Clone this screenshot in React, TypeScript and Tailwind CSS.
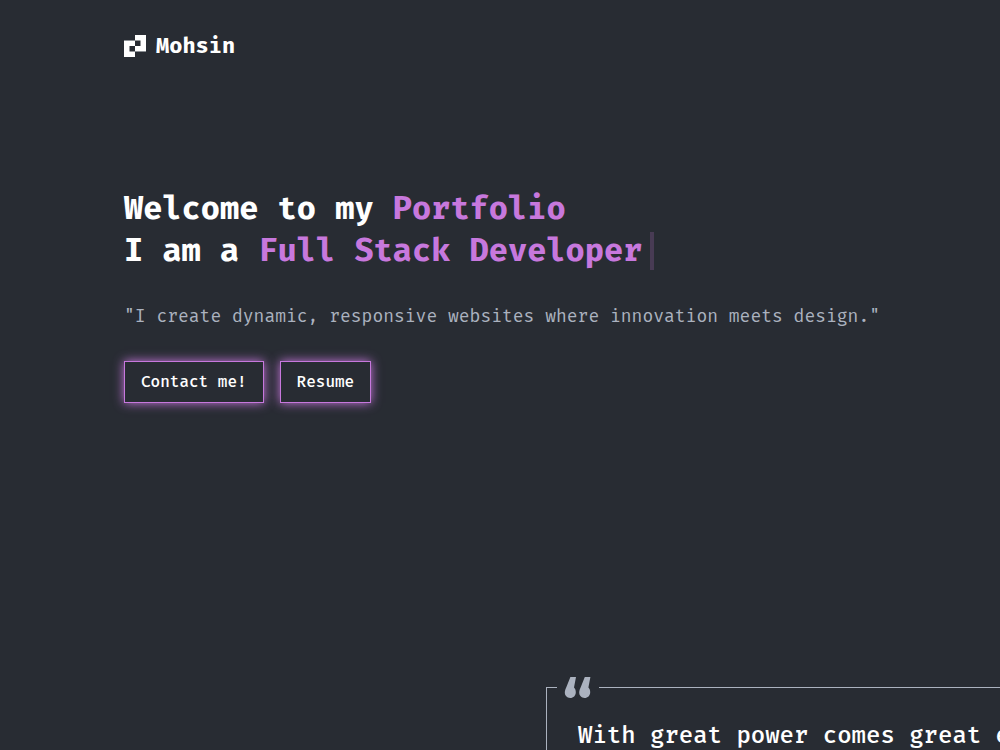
import type { ReactNode } from 'react';

function LogoMark() {
  return (
    <svg viewBox="0 0 22 22" className="size-[22px]" aria-hidden="true">
      <path fill="#ffffff" fillRule="evenodd" d="M11 0H22V17H11V11H16.5V5.5H11Z" />
      <path fill="#ffffff" fillRule="evenodd" d="M0 5H11V11H5.5V16.5H11V22H0Z" />
      <path fill="none" stroke="#8b8f94" d="M0 5.5H11M11 16.5H22" />
    </svg>
  );
}

function QuoteMark() {
  return (
    <svg viewBox="0 0 28 22" className="h-[22px] w-7" aria-hidden="true">
      <g fill="#abb2bf">
        <path d="M6.4 0H12L10 10.6C11.2 11.8 11.8 13.2 11.8 15.2C11.8 18.5 9.4 21 6.2 21C3 21 .8 18.7 .8 15.6C.8 13.8 1.4 12.2 2.2 10.4Z" />
        <path d="M20.8 0H26.4L24.4 10.6C25.6 11.8 26.2 13.2 26.2 15.2C26.2 18.5 23.8 21 20.6 21C17.4 21 15.2 18.7 15.2 15.6C15.2 13.8 15.8 12.2 16.6 10.4Z" />
      </g>
    </svg>
  );
}

interface GlowButtonProps {
  children: ReactNode;
}

function GlowButton({ children }: GlowButtonProps) {
  return (
    <button
      type="button"
      className="border border-[#c778dd] bg-[#282c33] px-4 py-2 text-base font-medium text-white shadow-[0_0_10px_#c778dd]"
    >
      {children}
    </button>
  );
}

export default function App() {
  return (
    <div className="h-screen overflow-hidden bg-[#282c33] font-['Fira_Mono','Fira_Code','DejaVu_Sans_Mono',monospace] text-white">
      <header className="px-[124px] pt-[30px]">
        <a href="#home" className="flex items-center gap-2.5">
          <LogoMark />
          <span className="text-[22px] leading-8 font-bold">Mohsin</span>
        </a>
      </header>

      <main>
        <section className="px-[124px] pt-[125px]">
          <h1 className="text-[32px] leading-[42px] font-semibold whitespace-nowrap">
            Welcome to my <span className="text-[#c778dd]">Portfolio</span>
            <br />
            I am a <span className="text-[#c778dd]">Full Stack Developer</span>
            <span className="ml-2 inline-block h-[38px] w-1 bg-[#c778dd]/20 align-[-9px]" />
          </h1>
          <p className="mt-[31px] text-lg leading-7 whitespace-nowrap text-[#abb2bf]">
            "I create dynamic, responsive websites where innovation meets design."
          </p>
          <div className="mt-[31px] flex gap-4">
            <GlowButton>Contact me!</GlowButton>
            <GlowButton>Resume</GlowButton>
          </div>
        </section>

        <section className="flex pt-[284px] pl-[546px]">
          <blockquote className="relative shrink-0 border border-[#abb2bf] px-[31px] py-8 text-2xl leading-[30px] font-medium whitespace-nowrap">
            <span className="absolute -top-[11px] left-2.5 bg-[#282c33] px-[7px]">
              <QuoteMark />
            </span>
            With great power comes great electricity bill
          </blockquote>
        </section>
      </main>
    </div>
  );
}
